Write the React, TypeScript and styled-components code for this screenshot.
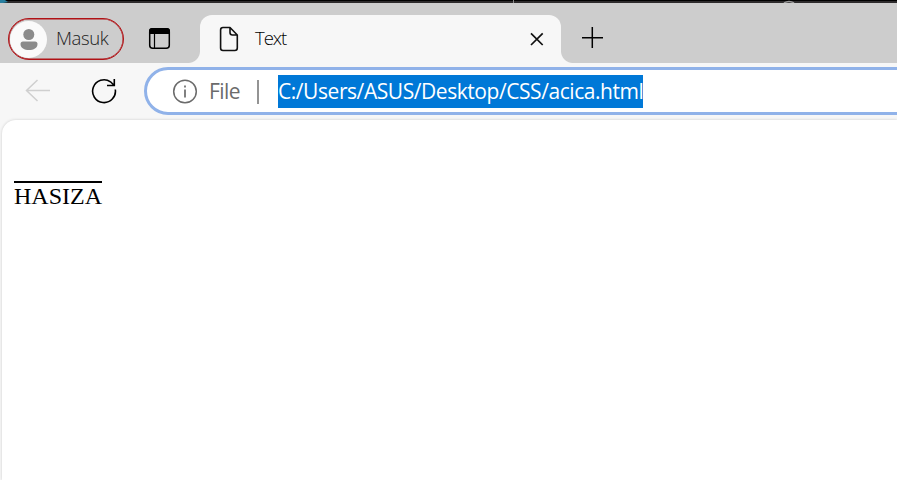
import React from 'react';
import styled, { createGlobalStyle } from 'styled-components';

const GlobalStyle = createGlobalStyle`
  * { box-sizing: border-box; }
  body { margin: 0; background: #f7f7f7; overflow: hidden; }
`;

const Window = styled.div`
  width: 100%;
  height: 100vh;
  display: flex;
  flex-direction: column;
  overflow: hidden;
  background: #f7f7f7;
  font-family: 'Open Sans', 'Noto Sans', sans-serif;
`;

const TopEdge = styled.svg`
  display: block;
  flex: none;
  width: 897px;
  height: 3px;
`;

const TabStrip = styled.header`
  flex: none;
  height: 60px;
  display: flex;
  background: #cdcdcd;
`;

const Profile = styled.div`
  width: 116px;
  height: 42px;
  margin: 15px 0 0 8px;
  padding-left: 1px;
  display: flex;
  align-items: center;
  border: 1px solid #b01216;
  box-shadow: inset 0 0 0 0.5px #b01216;
  border-radius: 21px;
`;

const Avatar = styled.div`
  flex: none;
  width: 37px;
  height: 37px;
  border-radius: 50%;
  background: #fafafa;
`;

const Label = styled.span<{ $size: number; $spacing: number; $color: string; $weight?: number }>`
  display: block;
  font-size: ${(p) => p.$size}px;
  letter-spacing: ${(p) => p.$spacing}px;
  color: ${(p) => p.$color};
  font-weight: ${(p) => p.$weight ?? 400};
  line-height: 32px;
  white-space: nowrap;
`;

const ProfileName = styled(Label)`
  margin: -2px 0 0 9px;
`;

const Glyph = styled.svg`
  display: block;
  flex: none;
  fill: none;
`;

const Workspaces = styled(Glyph)`
  margin: 24px 0 0 24px;
`;

const Tab = styled.div`
  position: relative;
  width: 361px;
  height: 48px;
  margin: 12px 0 0 28px;
  padding: 0 15px 0 19px;
  display: flex;
  align-items: center;
  background: #f7f7f7;
  border-radius: 12px 12px 0 0;

  &::before,
  &::after {
    content: '';
    position: absolute;
    bottom: 0;
    width: 12px;
    height: 12px;
  }
  &::before {
    right: 100%;
    background: radial-gradient(circle at 0 0, #cdcdcd 11.5px, #f7f7f7 12.5px);
  }
  &::after {
    left: 100%;
    background: radial-gradient(circle at 100% 0, #cdcdcd 11.5px, #f7f7f7 12.5px);
  }
`;

const TabTitle = styled(Label)`
  flex: 1;
  margin: -2px 0 0 16px;
`;

const NewTab = styled(Glyph)`
  margin: 23px 0 0 20px;
`;

const Toolbar = styled.nav`
  flex: none;
  height: 56px;
  display: flex;
  align-items: flex-start;
`;

const Back = styled(Glyph)`
  margin: 15px 0 0 25px;
`;

const Reload = styled(Glyph)`
  margin: 15px 0 0 40px;
`;

const AddressBar = styled.div`
  flex: 1;
  height: 48px;
  margin: 4px -40px 0 26px;
  padding-left: 25px;
  display: flex;
  align-items: center;
  background: #fff;
  border: 3px solid #90b2e9;
  border-radius: 24px;
`;

const Scheme = styled(Label)`
  width: 49px;
  margin-left: 10px;
  padding-left: 1px;
`;

const Divider = styled.div`
  width: 2px;
  height: 24px;
  margin: 1px 19px 0 0;
  background: #949494;
`;

const Selection = styled.div`
  width: 365px;
  height: 33px;
  background: #0078d7;
`;

const Page = styled.main`
  flex: 1;
  margin: 1px 0 0 2px;
  padding: 61px 0 0 12px;
  background: #fff;
  border-radius: 14px 0 0 0;
  box-shadow: 0 0 3px rgba(0, 0, 0, 0.18);
`;

const Overlined = styled.p`
  width: 88px;
  margin: 0;
  border-top: 2px solid #000;
  font: 24px/27px 'Liberation Serif', serif;
  color: #000;
`;

export default function App() {
  return (
    <Window>
      <GlobalStyle />
      <TopEdge viewBox="0 0 897 3">
        <path fill="#000" d="M0 0h897v1H0z" />
        <path fill="#2d2b2c" d="M0 1h897v2H0z" />
        <path fill="#287f9f" d="M0 0h5l3 2-5 1H0z" />
        <path stroke="#888" d="M513.5 0v3" />
        <path stroke="#999" strokeWidth="1.500" fill="none" d="M784 3q5-3 10 0" />
      </TopEdge>
      <TabStrip>
        <Profile>
          <Avatar>
            <Glyph width="37" height="37" viewBox="0 0 37 37">
              <circle cx="18.8" cy="13.5" r="5.500" fill="#8b8b8b" />
              <path fill="#8b8b8b" d="M13 20.500h12q2.500 0 2.500 2.500c0 4-4 6-8.500 6s-8.500-2-8.500-6q0-2.500 2.500-2.500z" />
            </Glyph>
          </Avatar>
          <ProfileName $size={18.5} $spacing={-0.4} $color="#1c1c1c" $weight={350}>Masuk</ProfileName>
        </Profile>
        <Workspaces width="24" height="24" viewBox="0 0 24 24">
          <rect x="1.700" y="1.700" width="19.600" height="19.600" rx="3" stroke="#000" strokeWidth="1.500" />
          <path fill="#000" d="M1 7V4q0-3 3-3h15q3 0 3 3v3z" />
          <path stroke="#000" strokeWidth="1.200" d="M6.500 6v15" />
        </Workspaces>
        <Tab>
          <Glyph width="20" height="26" viewBox="0 0 20 26">
            <path
              stroke="#111"
              strokeWidth="1.600"
              strokeLinejoin="round"
              d="M4 1.500h7L18.300 9v13q0 2.500-2.500 2.500H4Q1.600 24.500 1.600 22V4Q1.600 1.500 4 1.500zM11 1.500V6.500Q11 9 13.500 9h4.800"
            />
          </Glyph>
          <TabTitle $size={18.5} $spacing={-1} $color="#000" $weight={350}>Text</TabTitle>
          <Glyph width="18" height="18" viewBox="0 0 18 18">
            <path stroke="#111" strokeWidth="1.700" d="M3 3.300l11.700 11.700M14.700 3.300l-11.700 11.700" />
          </Glyph>
        </Tab>
        <NewTab width="24" height="24" viewBox="0 0 24 24">
          <path stroke="#000" strokeWidth="1.500" d="M1 11.700h21M11.300 1v21" />
        </NewTab>
      </TabStrip>
      <Toolbar>
        <Back width="26" height="26" viewBox="0 0 26 26">
          <path stroke="#cfcfcf" strokeWidth="1.500" d="M25 12.500H2M12.500 2L1.500 12.500l11 10.500" />
        </Back>
        <Reload width="27" height="27" viewBox="0 0 27 27">
          <path stroke="#000" strokeWidth="1.600" d="M24.300 11.500A11.400 11.400 0 1 1 19.500 3.800L22.800 7M23.300 1v6.500H16" />
        </Reload>
        <AddressBar>
          <Glyph width="26" height="26" viewBox="0 0 26 26">
            <circle cx="13" cy="13.500" r="11.300" stroke="#6b6b6b" strokeWidth="1.500" />
            <path stroke="#6b6b6b" strokeWidth="1.700" d="M13 11.500v8M13 7.500v2" />
          </Glyph>
          <Scheme $size={21} $spacing={-0.6} $color="#6b6b6b">File</Scheme>
          <Divider />
          <Selection>
            <Label $size={21} $spacing={-0.44} $color="#fff">C:/Users/ASUS/Desktop/CSS/acica.html</Label>
          </Selection>
        </AddressBar>
      </Toolbar>
      <Page>
        <Overlined>HASIZA</Overlined>
      </Page>
    </Window>
  );
}
